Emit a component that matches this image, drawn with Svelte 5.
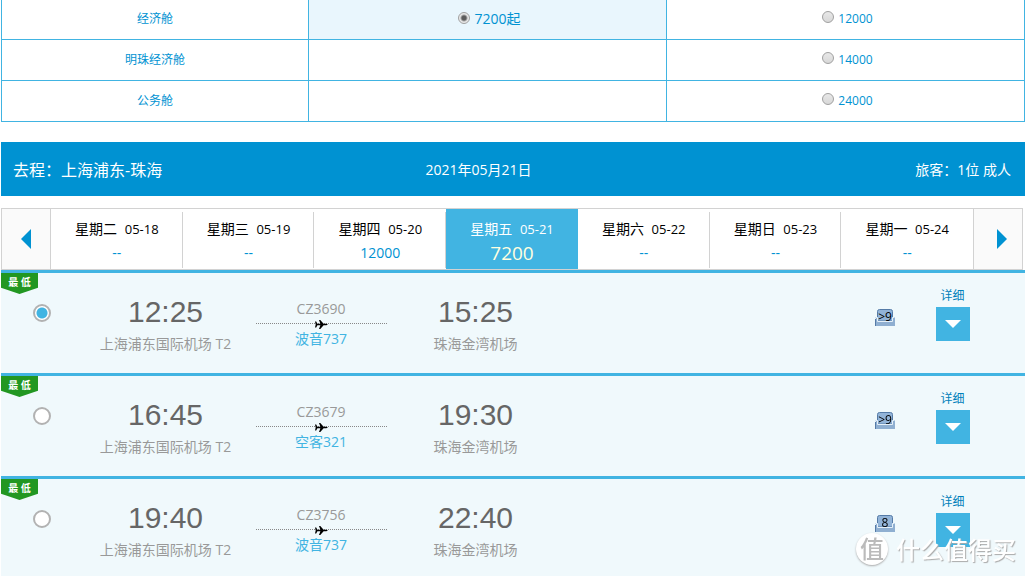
<script lang="ts">
  type Fare = { value: string; label: string } | null;

  const cabins: Array<{ name: string; fares: Fare[] }> = [
    { name: '经济舱', fares: [{ value: '7200', label: '7200起' }, { value: '12000', label: '12000' }] },
    { name: '明珠经济舱', fares: [null, { value: '14000', label: '14000' }] },
    { name: '公务舱', fares: [null, { value: '24000', label: '24000' }] }
  ];

  const days = [
    { week: '星期二', date: '05-18', price: '--' },
    { week: '星期三', date: '05-19', price: '--' },
    { week: '星期四', date: '05-20', price: '12000' },
    { week: '星期五', date: '05-21', price: '7200' },
    { week: '星期六', date: '05-22', price: '--' },
    { week: '星期日', date: '05-23', price: '--' },
    { week: '星期一', date: '05-24', price: '--' }
  ];

  const flights = [
    { no: 'CZ3690', plane: '波音737', depart: '12:25', arrive: '15:25', seats: '>9' },
    { no: 'CZ3679', plane: '空客321', depart: '16:45', arrive: '19:30', seats: '>9' },
    { no: 'CZ3756', plane: '波音737', depart: '19:40', arrive: '22:40', seats: '8' }
  ];

  let fare = $state('7200');
  let day = $state('05-21');
  let flight = $state('CZ3690');
</script>

<main>
  <table class="cabins">
    <tbody>
      {#each cabins as cabin}
        <tr>
          <th scope="row">{cabin.name}</th>
          {#each cabin.fares as item}
            <td class:selected={item?.value === fare}>
              {#if item}
                <label>
                  <input type="radio" name="fare" value={item.value} bind:group={fare} />
                  <span>{item.label}</span>
                </label>
              {/if}
            </td>
          {/each}
        </tr>
      {/each}
    </tbody>
  </table>

  <header class="trip">
    <h1>去程：上海浦东-珠海</h1>
    <span>2021年05月21日</span>
    <span class="guests">旅客：1位 成人</span>
  </header>

  <nav class="dates">
    <button class="step prev" aria-label="前一天">
      <svg width="10" height="20" viewBox="0 0 10 20"><path d="M10 0v20L0 10z" /></svg>
    </button>
    {#each days as item}
      <button class="day" class:active={item.date === day} onclick={() => (day = item.date)}>
        <span class="name">{item.week} <small>{item.date}</small></span>
        <span class="price">{item.price}</span>
      </button>
    {/each}
    <button class="step next" aria-label="后一天">
      <svg width="10" height="20" viewBox="0 0 10 20"><path d="M0 0v20l10-10z" /></svg>
    </button>
  </nav>

  {#each flights as item}
    <section class="flight">
      <span class="lowest">最 低</span>
      <div class="pick">
        <input type="radio" name="flight" value={item.no} aria-label={item.no} bind:group={flight} />
      </div>
      <div class="stop">
        <strong>{item.depart}</strong>
        <span>上海浦东国际机场 T2</span>
      </div>
      <div class="route">
        <span>{item.no}</span>
        <div class="line">
          <svg width="13" height="11" viewBox="0 0 13 11">
            <path d="M0 2.500h1.200l1.200 2.200h3L4 1h1.300l3.300 3.700h2.700l1.700.8-1.700.8H8.600L5.300 10H4l1.400-3.700h-3L1.200 8.500H0l.7-3z" />
          </svg>
        </div>
        <a href="#plane">{item.plane}</a>
      </div>
      <div class="stop">
        <strong>{item.arrive}</strong>
        <span>珠海金湾机场</span>
      </div>
      <div class="seats">
        <div class="seat">
          <svg width="20" height="17" viewBox="0 0 20 17">
            <path d="M2.500 12V2.500q0-2 2-2h11q2 0 2 2V12z" fill="#92b4d8" stroke="#557ba7" />
            <path d="M0 8h3v4h14V8h3v9H0z" fill="#8fafd1" />
            <path d="M.5 17V8.500h2v4h15v-4h2" fill="none" stroke="#e5f0f8" />
            <path d="M.5 10v7" stroke="#557ba7" />
          </svg>
          <span>{item.seats}</span>
        </div>
      </div>
      <div class="detail">
        <a href="#detail">详细</a>
        <button aria-label="展开详细">
          <svg width="16" height="8" viewBox="0 0 16 8"><path d="M0 0h16L8 8z" /></svg>
        </button>
      </div>
    </section>
  {/each}

  <div class="watermark"><b>值</b><span>什么值得买</span></div>
</main>

<style>
  :global(html) {
    scrollbar-width: none;
  }

  :global(body) {
    margin: 0;
    background: #fff;
  }

  main {
    padding: 0 2px 0 1px;
    font: 14px/20px 'Open Sans', 'Noto Sans CJK SC', sans-serif;
    color: #0092d2;
  }

  button,
  input {
    font: inherit;
    margin: 0;
    padding: 0;
    border: 0;
    appearance: none;
    cursor: pointer;
  }

  a {
    color: inherit;
    text-decoration: none;
  }

  svg {
    display: block;
    fill: currentColor;
  }

  .cabins {
    width: 100%;
    table-layout: fixed;
    border-spacing: 0;
    border-left: 1px solid #41b4e2;
    font-size: 12px;
  }

  .cabins th,
  .cabins td {
    box-sizing: border-box;
    width: 35%;
    height: 41px;
    padding: 0;
    border-right: 1px solid #41b4e2;
    border-bottom: 1px solid #41b4e2;
    text-align: center;
  }

  .cabins th {
    width: 30%;
    font-weight: 400;
  }

  .cabins tr:first-child > * {
    height: 40px;
    padding-bottom: 2px;
  }

  .cabins label {
    display: flex;
    justify-content: center;
    gap: 4px;
    padding-left: 4px;
  }

  .cabins input {
    box-sizing: border-box;
    width: 12px;
    height: 12px;
    margin-top: 2px;
    border: 1px solid #a0a0a0;
    border-radius: 50%;
    background: linear-gradient(#e8e8e8, #d8d8d8);
  }

  .cabins input:checked {
    margin-top: 3px;
    background: radial-gradient(#5c5c5c 2px, #e8e8e8 4px);
  }

  .cabins .selected {
    background: #e9f6fd;
    font-size: 14px;
  }

  .trip {
    display: grid;
    grid-template-columns: 1fr auto 1fr;
    align-items: center;
    height: 54px;
    box-sizing: border-box;
    margin: 20px 0 12px;
    padding: 1px 14px 0 12px;
    background: #0092d2;
    color: #fff;
  }

  .trip h1 {
    margin: 0;
    font-size: 16px;
    font-weight: 400;
  }

  .trip span {
    margin-right: 67px;
  }

  .trip .guests {
    margin: 0;
    text-align: right;
  }

  .dates {
    display: flex;
    margin-right: 2px;
    border: 1px solid #d2d2d2;
  }

  .dates button {
    display: flex;
    background: #fff;
    color: #0092d2;
  }

  .dates .step {
    flex: 0 0 49px;
    box-sizing: border-box;
    align-items: center;
    justify-content: center;
    background: #fafafa;
  }

  .dates .prev {
    border-right: 1px solid #d2d2d2;
  }

  .dates .next {
    border-left: 1px solid #d2d2d2;
    padding-left: 8px;
  }

  .dates .day {
    flex: 1;
    flex-direction: column;
    align-items: center;
    gap: 4px;
    height: 60px;
    box-sizing: border-box;
    padding: 10px 0;
    background: linear-gradient(#d2d2d2, #d2d2d2) right 3px / 1px 56px no-repeat #fff;
  }

  .dates .day:nth-last-child(2) {
    background: #fff;
  }

  .name {
    color: #000;
  }

  .name small {
    margin-left: 4px;
    font-size: 13px;
  }

  .dates .active {
    background: #41b4e2;
  }

  .active .name {
    color: #fff;
  }

  .active .price {
    font-size: 19px;
    color: #ffffe0;
  }

  .flight {
    position: relative;
    display: grid;
    grid-template-columns: 82fr 165fr 146fr 163fr 293fr 70fr 65fr 40fr;
    align-items: center;
    height: 100px;
    border-top: 3px solid #41b4e2;
    background: #f0f9fc;
    color: #999;
    text-align: center;
  }

  .lowest {
    position: absolute;
    top: 0;
    left: 0;
    width: 37px;
    height: 21px;
    background: #229722;
    clip-path: polygon(0 0, 100% 0, 100% 70%, 50% 100%, 0 70%);
    color: #fff;
    font-size: 10px;
    font-weight: 700;
    line-height: 18px;
  }

  .pick {
    display: flex;
    justify-content: center;
    padding-bottom: 20px;
  }

  .pick input {
    box-sizing: border-box;
    width: 18px;
    height: 18px;
    border: 2px solid #b2b2b2;
    border-radius: 50%;
    background: #fff;
  }

  .pick input:checked {
    background: radial-gradient(#41b4e2 5px, #fff 6px);
  }

  .stop {
    display: grid;
    gap: 4px;
    padding-top: 2px;
  }

  .stop strong {
    color: #666;
    font: 30px/36px 'Liberation Sans', Arial, sans-serif;
  }

  .route {
    display: grid;
    justify-content: center;
    padding-top: 2px;
  }

  .route .line {
    display: flex;
    align-items: center;
    justify-content: center;
    width: 131px;
    height: 11px;
    padding-bottom: 1px;
    margin-bottom: -1px;
    box-sizing: border-box;
    background: repeating-linear-gradient(90deg, #888 0 1px, transparent 1px 2px) 0 4px / 100% 1px no-repeat;
    color: #000;
  }

  .route a {
    color: #41b4e2;
  }

  .seats {
    grid-column: 6;
    display: flex;
    justify-content: center;
    padding-bottom: 12px;
  }

  .seat {
    display: grid;
    width: 20px;
  }

  .seat > * {
    grid-area: 1 / 1;
  }

  .seat span {
    color: #000;
    font-size: 12px;
    line-height: 15px;
    z-index: 1;
  }

  .detail {
    display: grid;
    justify-items: center;
    gap: 1px;
    padding-bottom: 20px;
    color: #0080ba;
    font-size: 12px;
  }

  .detail button {
    display: grid;
    place-items: center;
    width: 34px;
    height: 34px;
    background: #41b4e2;
    color: #fff;
  }

  .watermark {
    position: fixed;
    right: 11px;
    bottom: 10px;
    display: flex;
    align-items: center;
    gap: 8px;
    color: #fff;
    font: 500 24px/34px 'Noto Sans CJK SC', sans-serif;
    text-shadow: 1px 1px 1px #aaa;
    pointer-events: none;
  }

  .watermark b {
    width: 32px;
    height: 32px;
    border-radius: 50%;
    background: #fff;
    box-shadow: 0 1px 2px #aaa;
    color: #bbb;
    font-weight: 500;
    line-height: 30px;
    text-align: center;
    text-shadow: none;
  }
</style>
